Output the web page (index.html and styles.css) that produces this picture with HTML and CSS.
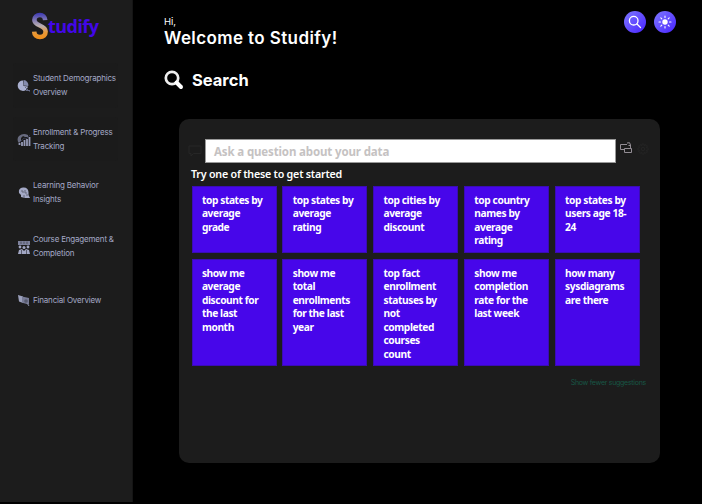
FILE: index.html
```
<!DOCTYPE html>
<html lang="en">
<head>
<meta charset="utf-8">
<title>Studify</title>
<link rel="stylesheet" href="styles.css">
</head>
<body>
<div class="app">
  <aside class="sidebar">
    <div class="logo">
      <svg class="logo-mark" viewBox="0 0 18 28" width="18" height="28">
        <defs><linearGradient id="lg" gradientUnits="userSpaceOnUse" x1="0" y1="0" x2="0" y2="28"><stop offset=".05" stop-color="#403cb4"/><stop offset=".5" stop-color="#b9aeb0"/><stop offset=".72" stop-color="#e79a3c"/><stop offset="1" stop-color="#f08c14"/></linearGradient></defs>
        <path d="M14.2 8.2C14 4.8 11.8 3 9 3C5.6 3 3.4 5 3.4 8C3.4 14.5 14.6 12.500 14.600 19.500C14.600 23 12.300 25 9 25C5.500 25 3.300 23 3.200 19.600" fill="none" stroke="url(#lg)" stroke-width="4.600"/>
      </svg>
      <span class="logo-text">tudify</span>
    </div>
    <nav class="nav">
      <a class="nav-item framed">
        <svg class="nav-icon" viewBox="0 0 14 14"><path d="M6 1.500A5.200 5.200 0 1 0 11 7.600L6.500 7Z" fill="#aab0d0"/><path d="M6.500 1A5 5 0 0 1 11.300 7L6.500 6.500Z" fill="#858cae"/><path d="M8 8L12.500 12.500M9 11.500H13" stroke="#666b87"/></svg>
        <span>Student Demographics<br>Overview</span>
      </a>
      <a class="nav-item framed">
        <svg class="nav-icon" viewBox="0 0 14 14"><path d="M2 10A5 5 0 0 1 2 3Q6-.5 11 2V4H8L6 3L4 5V8Z" fill="#686b7f"/><path d="M2.500 12V10M5 13V9M7.500 13V7M10 13V6M12.500 13V4" stroke="#9599b5" stroke-width="1.800"/><path d="M3 9L7 5L9 6L13 2" stroke="#34364a" fill="none"/></svg>
        <span>Enrollment &amp; Progress<br>Tracking</span>
      </a>
      <a class="nav-item">
        <svg class="nav-icon" viewBox="0 0 14 14"><path d="M2 7Q1 2 6 1.500Q11 1 11.500 6V9L13 12H8L4 11V9Z" fill="#a4a9c6"/><path d="M4 5H6V7M8 4V7H10M7 9V12M9 9H11" stroke="#626678" fill="none"/></svg>
        <span>Learning Behavior<br>Insights</span>
      </a>
      <a class="nav-item">
        <svg class="nav-icon" viewBox="0 0 14 14"><path d="M1 1H13V5H1Z" fill="#7d819c"/><path d="M4 1.500V4M7 1.500V4M10 1.500V4" stroke="#50535f"/><g fill="#a1a6c3"><circle cx="3" cy="7" r="1.400"/><circle cx="7" cy="7.500" r="1.500"/><circle cx="11" cy="7" r="1.400"/><path d="M1 14L2 10L5 9L7 11L9 9L12 10L13 14Z"/></g><path d="M4.500 10V14M9.500 10V14" stroke="#3a3c48" stroke-width=".7"/></svg>
        <span>Course Engagement &amp;<br>Completion</span>
      </a>
      <a class="nav-item">
        <svg class="nav-icon" viewBox="0 0 14 14"><path d="M1 1L6 2.500V9L2 7.500Z" fill="#9ba0bc"/><path d="M5 2.500L12 4V10.500L5 8.800Z" fill="#777b95"/><circle cx="9" cy="7" r="1.800" fill="#565a6e"/><path d="M10 9L12 12" stroke="#858aa3"/></svg>
        <span>Financial Overview</span>
      </a>
    </nav>
  </aside>
  <main class="main">
    <header class="top">
      <div class="greeting">
        <p class="hi">Hi,</p>
        <h1 class="welcome">Welcome to Studify!</h1>
      </div>
      <div class="actions">
        <button class="round"><svg viewBox="0 0 22 22"><circle cx="9.700" cy="9.700" r="4.300"/><path d="M13 13L16.500 16.500"/></svg></button>
        <button class="round"><svg viewBox="0 0 22 22"><circle cx="11" cy="11" r="2.700" fill="#fff" stroke="none"/><path d="M11 5V6.500M11 15.500V17M5 11H6.500M15.500 11H17M6.800 6.800L7.800 7.800M14.200 14.200L15.200 15.200M15.200 6.800L14.200 7.800M7.800 14.200L6.800 15.200" stroke-width="1.100"/></svg></button>
      </div>
    </header>
    <h2 class="section"><svg class="section-icon" viewBox="0 0 20 20"><circle cx="8" cy="8" r="6.200" fill="none" stroke="#eee" stroke-width="2.700"/><path d="M12.500 12.500L17 17" stroke="#fff" stroke-width="4" stroke-linecap="round"/></svg><span>Search</span></h2>
    <section class="panel">
      <div class="ask">
        <svg class="chat" viewBox="0 0 14 12"><path d="M1 1H13V8.500H5.500L3 11V8.500H1Z"/></svg>
        <div class="field">Ask a question about your data</div>
        <svg class="convert" viewBox="0 0 14 12"><path d="M5 7.500H1.500V2.500H8M5.500 6.500H12.500V10.500H5.500ZM11.500 3V6"/><path d="M8 1L10.500 .7L11.500 3M9.500 3.500L12 3.500"/></svg>
        <svg class="gear" viewBox="0 0 14 14"><path d="M6 1H8L8.500 3L10.500 2L12 3.500L11 5.500L13 6V8L11 8.500L12 10.500L10.500 12L8.500 11L8 13H6L5.500 11L3.500 12L2 10.500L3 8.500L1 8V6L3 5.500L2 3.500L3.500 2L5.500 3Z"/><circle cx="7" cy="7" r="2"/></svg>
      </div>
      <p class="try">Try one of these to get started</p>
      <div class="tiles">
        <div class="tile">top states by<br>average<br>grade</div>
        <div class="tile">top states by<br>average<br>rating</div>
        <div class="tile">top cities by<br>average<br>discount</div>
        <div class="tile">top country<br>names by<br>average<br>rating</div>
        <div class="tile">top states by<br>users age 18-<br>24</div>
        <div class="tile">show me<br>average<br>discount for<br>the last<br>month</div>
        <div class="tile">show me<br>total<br>enrollments<br>for the last<br>year</div>
        <div class="tile">top fact<br>enrollment<br>statuses by<br>not<br>completed<br>courses<br>count</div>
        <div class="tile">show me<br>completion<br>rate for the<br>last week</div>
        <div class="tile">how many<br>sysdiagrams<br>are there</div>
      </div>
      <a class="fewer">Show fewer suggestions</a>
    </section>
  </main>
</div>
</body>
</html>
```
FILE: styles.css
```
* { box-sizing: border-box; }
body { margin: 0; background: #000; color: #fff; font-family: Inter, "Liberation Sans", sans-serif; overflow: hidden; }
p, h1, h2 { margin: 0; }
.app { display: flex; height: 504px; }
.sidebar { width: 133px; height: 502px; flex: none; background: #1c1c1c; border-right: 1px solid #151515; }
.logo { display: flex; height: 42px; padding: 12px 0 0 31px; }
.logo-mark { flex: none; }
.logo-text { font: bold 18px/28px "Open Sans", sans-serif; letter-spacing: -.55px; color: #4207e8; margin-left: -1px; }
.nav { display: flex; flex-direction: column; gap: 9px; padding: 21px 14px 0 13px; }
.nav-item { display: flex; align-items: center; height: 44.600px; padding-left: 4px; gap: 2px; font-size: 8px; letter-spacing: -.19px; line-height: 14px; color: #a4a9c6; white-space: nowrap; border-radius: 3px; }
.framed { background: #1b1b1b; }
.nav-icon { width: 14px; height: 14px; flex: none; position: relative; top: 1px; }
.main { flex: 1; padding: 10px 42px 0 46px; }
.top { display: flex; justify-content: space-between; height: 58px; margin-left: -15px; margin-right: -16px; }
.greeting { padding: 6px 0 0; }
.hi { font-size: 9.500px; line-height: 11px; }
.welcome { font-size: 17px; letter-spacing: .4px; line-height: 23px; font-weight: 600; white-space: nowrap; }
.actions { display: flex; gap: 8px; padding-top: 1px; }
.round { width: 22px; height: 22px; padding: 0; border: 0; border-radius: 50%; background: linear-gradient(135deg, #7e78ff, #4823ff); }
.round svg { display: block; width: 22px; height: 22px; fill: none; stroke: #fff; stroke-width: 1.300; stroke-linecap: round; }
.section { display: flex; align-items: center; gap: 8px; height: 23px; margin-left: -15px; font-size: 16.500px; font-weight: 700; }
.section-icon { width: 20px; height: 20px; }
.panel { margin-top: 28px; height: 344px; background: #1c1c1c; border-radius: 10px; padding: 20px 12px 0; font-family: "Noto Sans", "Open Sans", sans-serif; }
.ask { display: flex; align-items: flex-start; height: 24px; margin-left: -3px; margin-right: -2px; }
.chat, .gear { fill: none; stroke: #262626; width: 14px; height: 12px; }
.chat { margin-top: 6px; }
.field { width: 411px; height: 24px; margin-left: 3px; padding-left: 8px; background: #fff; border: 1px solid #999; color: #c5c2c2; font-size: 11.500px; letter-spacing: -.14px; line-height: 24px; font-weight: 700; white-space: nowrap; }
.convert { width: 14px; height: 12px; margin: 3px 0 0 3px; fill: none; stroke: #938d94; stroke-width: 1; }
.gear { margin: 4px 0 0 3px; }
.try { height: 23px; font-size: 10.700px; letter-spacing: -.22px; line-height: 22px; font-weight: 600; white-space: nowrap; }
.tiles { display: grid; grid-template-columns: repeat(5, 85px); grid-template-rows: 67px 107px; gap: 6px 5.800px; padding-left: .5px; }
.tile { background: #4706ea; border: 1px solid #3a0cb5; padding: 7px 0 0 9.400px; font-size: 10.200px; letter-spacing: -.4px; line-height: 13.450px; font-weight: 700; white-space: nowrap; }
.fewer { display: block; margin: 11px 2px 0 0; text-align: right; font: 7px/12px Inter, sans-serif; letter-spacing: -.27px; color: #175746; }
```
